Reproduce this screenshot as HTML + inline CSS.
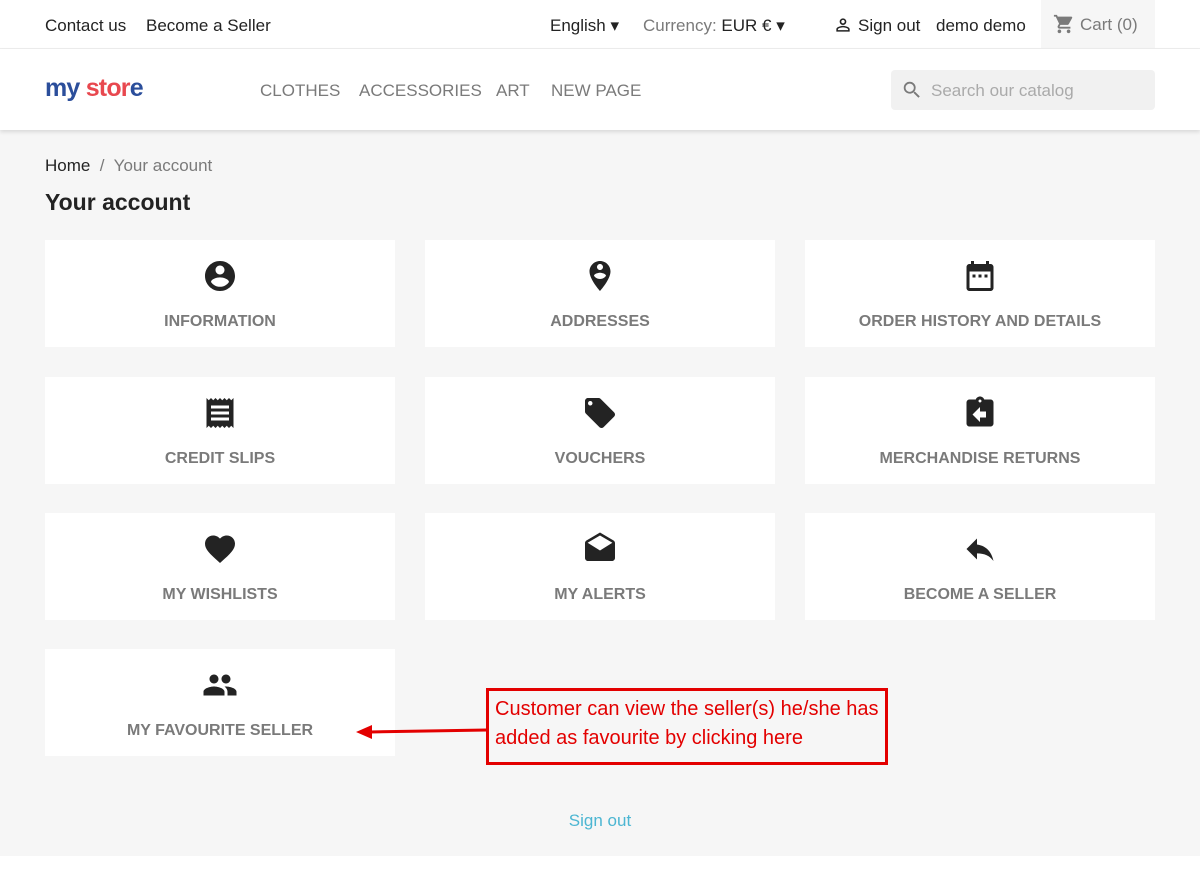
<!DOCTYPE html><html><head><meta charset="utf-8"><style>
*{box-sizing:border-box;margin:0;padding:0}
body{width:1200px;height:880px;background:#fff;font-family:"Liberation Sans",sans-serif;color:#232323;position:relative;overflow:hidden}
.top{height:49px;border-bottom:1px solid #eee;position:relative;font-size:17px}
.top span{position:absolute;top:16px}
.hdr{height:81px;background:#fff;box-shadow:0 2px 4px rgba(0,0,0,.12);position:relative;z-index:2}
.nav{position:absolute;font-size:17px;color:#7a7a7a}
.main{position:absolute;top:130px;left:0;width:1200px;height:726px;background:#f6f6f6}
.tile{position:absolute;width:350px;height:107px;background:#fff;text-align:center}
.tile svg{position:absolute;left:157px;top:18px;width:36px;height:36px;fill:#232323}
.tile div{position:absolute;top:73px;width:100%;font-size:16px;font-weight:bold;color:#7a7a7a}
</style></head><body>
<div class="top">
<span style="left:45px">Contact us</span><span style="left:146px">Become a Seller</span>
<span style="left:550px">English ▾</span><span style="left:643px;color:#7a7a7a">Currency: <b style="font-weight:normal;color:#232323">EUR € ▾</b></span>
<svg style="position:absolute;left:833px;top:15px" width="20" height="20" viewBox="0 0 24 24" fill="#232323"><path d="M12 5.9c1.16 0 2.1.94 2.1 2.1s-.94 2.1-2.1 2.1S9.9 9.16 9.9 8s.94-2.1 2.1-2.1m0 9c2.97 0 6.1 1.46 6.1 2.1v1.1H5.9V17c0-.64 3.130-2.1 6.1-2.1M12 4C9.79 4 8 5.79 8 8s1.79 4 4 4 4-1.79 4-4-1.79-4-4-4zm0 9c-2.67 0-8 1.34-8 4v3h16v-3c0-2.66-5.33-4-8-4z"/></svg>
<span style="left:858px">Sign out</span><span style="left:936px">demo demo</span>
<div style="position:absolute;left:1041px;top:0;width:114px;height:48px;background:#f6f6f6;color:#7a7a7a">
<svg style="position:absolute;left:12px;top:13px" width="22" height="22" viewBox="0 0 24 24" fill="#7a7a7a"><path d="M7 18c-1.1 0-1.99.9-1.99 2S5.9 22 7 22s2-.9 2-2-.9-2-2-2zM1 2v2h2l3.6 7.59-1.35 2.45c-.16.28-.25.61-.25.96 0 1.1.9 2 2 2h12v-2H7.42c-.14 0-.25-.11-.25-.25l.03-.12.9-1.63h7.45c.75 0 1.41-.41 1.750-1.03l3.58-6.49A1 1 0 0 0 20 4H5.21l-.94-2H1zm16 16c-1.1 0-1.99.9-1.99 2s.89 2 1.99 2 2-.9 2-2-.9-2-2-2z"/></svg>
<span style="left:39px;top:15px;position:absolute">Cart (0)</span></div>
</div>
<div class="hdr">
<div style="position:absolute;left:45px;top:25px;font-size:25px;font-weight:bold;letter-spacing:-0.8px"><span style="color:#2b4e9b">my</span> <span style="color:#e8484f">stor</span><span style="color:#2b4e9b">e</span></div>
<div class="nav" style="left:260px;top:32px">CLOTHES</div>
<div class="nav" style="left:359px;top:32px">ACCESSORIES</div>
<div class="nav" style="left:496px;top:32px">ART</div>
<div class="nav" style="left:551px;top:32px">NEW PAGE</div>
<div style="position:absolute;left:891px;top:21px;width:264px;height:40px;background:#f1f1f1;border-radius:4px">
<svg style="position:absolute;left:10px;top:9px" width="22" height="22" viewBox="0 0 24 24" fill="#7a7a7a"><path d="M15.5 14h-.79l-.28-.27A6.47 6.47 0 0 0 16 9.5 6.5 6.5 0 1 0 9.5 16c1.61 0 3.09-.59 4.23-1.57l.27.28v.79l5 4.99L20.49 19l-4.99-5zm-6 0C7.01 14 5 11.99 5 9.5S7.01 5 9.5 5 14 7.01 14 9.5 11.99 14 9.5 14z"/></svg>
<span style="position:absolute;left:40px;top:11px;font-size:17px;color:#aaa">Search our catalog</span></div>
</div>
<div class="main">
<div style="position:absolute;left:45px;top:26px;font-size:17px">Home <span style="color:#7a7a7a">&nbsp;/&nbsp; Your account</span></div>
<div style="position:absolute;left:45px;top:59px;font-size:23px;font-weight:bold">Your account</div>
<div class="tile" style="left:45px;top:110px"><svg viewBox="0 0 24 24"><path d="M12 2C6.48 2 2 6.48 2 12s4.48 10 10 10 10-4.48 10-10S17.52 2 12 2zm0 3c1.66 0 3 1.34 3 3s-1.34 3-3 3-3-1.34-3-3 1.34-3 3-3zm0 14.2c-2.5 0-4.71-1.28-6-3.22.03-1.99 4-3.08 6-3.08 1.99 0 5.97 1.09 6 3.08-1.29 1.94-3.5 3.22-6 3.22z"/></svg><div>INFORMATION</div></div>
<div class="tile" style="left:425px;top:110px"><svg viewBox="0 0 24 24"><path d="M12 2C8.14 2 5 5.14 5 9c0 5.25 7 13 7 13s7-7.750 7-13c0-3.86-3.14-7-7-7zm0 2c1.1 0 2 .9 2 2 0 1.11-.9 2-2 2s-2-.89-2-2c0-1.1.9-2 2-2zm0 10c-1.67 0-3.14-.85-4-2.15.02-1.32 2.67-2.05 4-2.05s3.98.73 4 2.05c-.86 1.3-2.33 2.15-4 2.15z"/></svg><div>ADDRESSES</div></div>
<div class="tile" style="left:805px;top:110px"><svg viewBox="0 0 24 24"><path d="M9 11H7v2h2v-2zm4 0h-2v2h2v-2zm4 0h-2v2h2v-2zm2-7h-1V2h-2v2H8V2H6v2H5c-1.11 0-1.99.9-1.99 2L3 20c0 1.1.89 2 2 2h14c1.1 0 2-.9 2-2V6c0-1.1-.9-2-2-2zm0 16H5V9h14v11z"/></svg><div>ORDER HISTORY AND DETAILS</div></div>
<div class="tile" style="left:45px;top:247px"><svg viewBox="0 0 24 24"><path d="M18 17H6v-2h12v2zm0-4H6v-2h12v2zm0-4H6V7h12v2zM3 22l1.5-1.5L6 22l1.5-1.5L9 22l1.5-1.5L12 22l1.5-1.5L15 22l1.5-1.5L18 22l1.5-1.5L21 22V2l-1.5 1.5L18 2l-1.5 1.5L15 2l-1.5 1.5L12 2l-1.5 1.5L9 2 7.5 3.5 6 2 4.5 3.5 3 2v20z"/></svg><div>CREDIT SLIPS</div></div>
<div class="tile" style="left:425px;top:247px"><svg viewBox="0 0 24 24"><path d="M21.41 11.58l-9-9C12.05 2.22 11.55 2 11 2H4c-1.1 0-2 .9-2 2v7c0 .55.22 1.05.59 1.42l9 9c.36.36.86.58 1.41.58.55 0 1.05-.22 1.41-.59l7-7c.37-.36.59-.86.59-1.41 0-.55-.23-1.06-.59-1.42zM5.5 7C4.67 7 4 6.33 4 5.5S4.67 4 5.5 4 7 4.67 7 5.5 6.33 7 5.5 7z"/></svg><div>VOUCHERS</div></div>
<div class="tile" style="left:805px;top:247px"><svg viewBox="0 0 24 24"><path d="M19 3h-4.18C14.4 1.84 13.3 1 12 1c-1.3 0-2.4.84-2.82 2H5c-1.1 0-2 .9-2 2v14c0 1.1.9 2 2 2h14c1.1 0 2-.9 2-2V5c0-1.1-.9-2-2-2zm-7 0c.55 0 1 .45 1 1s-.45 1-1 1-1-.45-1-1 .45-1 1-1zm4 12h-4v3l-5-5 5-5v3h4v4z"/></svg><div>MERCHANDISE RETURNS</div></div>
<div class="tile" style="left:45px;top:383px"><svg viewBox="0 0 24 24"><path d="M12 21.35l-1.45-1.32C5.4 15.36 2 12.28 2 8.5 2 5.42 4.42 3 7.5 3c1.74 0 3.41.81 4.5 2.09C13.09 3.81 14.76 3 16.5 3 19.58 3 22 5.420 22 8.5c0 3.78-3.4 6.86-8.55 11.54L12 21.35z"/></svg><div>MY WISHLISTS</div></div>
<div class="tile" style="left:425px;top:383px"><svg viewBox="0 0 24 24"><path d="M21.99 8c0-.72-.37-1.35-.94-1.7L12 1 2.95 6.3C2.38 6.65 2 7.28 2 8v10c0 1.1.9 2 2 2h16c1.1 0 2-.9 2-2l-.01-10zM12 13L3.74 7.84 12 3l8.26 4.84L12 13z"/></svg><div>MY ALERTS</div></div>
<div class="tile" style="left:805px;top:383px"><svg viewBox="0 0 24 24"><path d="M10 9V5l-7 7 7 7v-4.1c5 0 8.5 1.6 11 5.1-1-5-4-10-11-11z"/></svg><div>BECOME A SELLER</div></div>
<div class="tile" style="left:45px;top:519px"><svg viewBox="0 0 24 24"><path d="M16 11c1.66 0 2.99-1.34 2.99-3S17.66 5 16 5c-1.66 0-3 1.34-3 3s1.34 3 3 3zm-8 0c1.66 0 2.99-1.34 2.99-3S9.66 5 8 5C6.34 5 5 6.34 5 8s1.34 3 3 3zm0 2c-2.33 0-7 1.17-7 3.5V19h14v-2.5c0-2.33-4.67-3.5-7-3.5zm8 0c-.29 0-.62.02-.97.05 1.16.84 1.97 1.97 1.97 3.45V19h6v-2.5c0-2.33-4.67-3.5-7-3.5z"/></svg><div>MY FAVOURITE SELLER</div></div>
<div style="position:absolute;top:558px;width:402px;height:77px;border:3px solid #e30000;color:#e30000;font-size:20px;line-height:29px;padding:4px 6px;left:486px">Customer can view the seller(s) he/she has added as favourite by clicking here</div>
<svg style="position:absolute;left:350px;top:590px" width="140" height="20"><line x1="137" y1="10" x2="20" y2="12" stroke="#e30000" stroke-width="3"/><polygon points="6,12 22,5 22,19" fill="#e30000"/></svg>
<div style="position:absolute;left:0;width:1200px;top:681px;text-align:center;font-size:17px;color:#4cb6d2">Sign out</div>
</div>
</body></html>
